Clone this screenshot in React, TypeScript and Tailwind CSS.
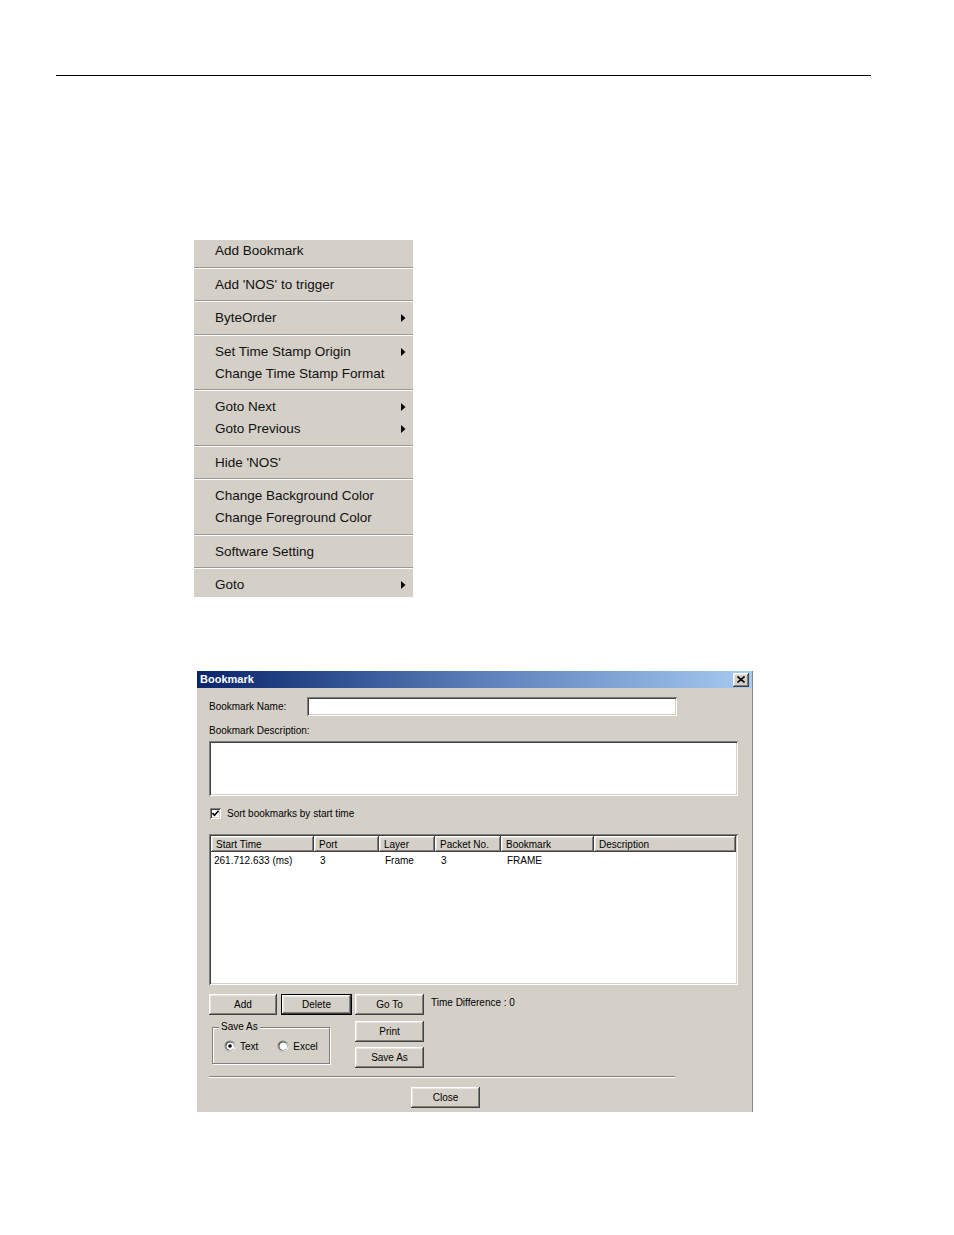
import React from "react";

const raised =
  "bg-[#d4d0c8] shadow-[inset_-1px_-1px_0_#404040,inset_1px_1px_0_#ffffff,inset_-2px_-2px_0_#808080,inset_2px_2px_0_#e8e6e1]";
const sunken =
  "bg-white shadow-[inset_1px_1px_0_#808080,inset_-1px_-1px_0_#ffffff,inset_2px_2px_0_#404040,inset_-2px_-2px_0_#d4d0c8]";

function Arrow() {
  return (
    <svg width="5" height="8" viewBox="0 0 5 8" className="absolute right-[7px] top-1/2 -translate-y-1/2">
      <path d="M0 0 L4.5 4 L0 8 Z" fill="#000" />
    </svg>
  );
}

function Item({ label, sub }: { label: string; sub?: boolean }) {
  return (
    <div className="relative h-[22px] flex items-center pl-[21px] pt-[1px] text-[13.5px] text-[#111]">
      {label}
      {sub && <Arrow />}
    </div>
  );
}

function Sep() {
  return (
    <div className="h-[11.5px] flex flex-col justify-center">
      <div className="h-px bg-[#9a9893]" />
      <div className="h-px bg-white" />
    </div>
  );
}

function Btn({ label, w, def }: { label: string; w: string; def?: boolean }) {
  if (def) {
    return (
      <div className={`${w} h-[21px] border border-black`}>
        <div className={`${raised} w-full h-full flex items-center justify-center`}>{label}</div>
      </div>
    );
  }
  return <div className={`${raised} ${w} h-[21px] flex items-center justify-center`}>{label}</div>;
}

function Radio({ on }: { on?: boolean }) {
  return (
    <svg width="12" height="12" viewBox="0 0 12 12">
      <circle cx="6" cy="6" r="5.5" fill="#808080" />
      <circle cx="6.5" cy="6.5" r="5" fill="#ffffff" />
      <circle cx="6" cy="6" r="4.5" fill="#404040" />
      <circle cx="6.3" cy="6.3" r="3.8" fill="#ffffff" />
      {on && <circle cx="6" cy="6" r="1.8" fill="#000" />}
    </svg>
  );
}

const cols = [
  { t: "Start Time", w: "w-[103px]" },
  { t: "Port", w: "w-[65px]" },
  { t: "Layer", w: "w-[56px]" },
  { t: "Packet No.", w: "w-[66px]" },
  { t: "Bookmark", w: "w-[93px]" },
  { t: "Description", w: "w-[142px]" },
];
const row = ["261.712.633 (ms)", "3", "Frame", "3", "FRAME", ""];

export default function App() {
  return (
    <div className="w-[954px] h-[1235px] bg-white flex flex-col" style={{ fontFamily: '"Liberation Sans", Arial, sans-serif' }}>
      <div className="mt-[75px] ml-[56px] w-[815px] h-px bg-black" />

      {/* Context menu */}
      <div className="mt-[164px] ml-[194px] w-[219px] bg-[#d4d0c8] pb-[1px]">
        <Item label="Add Bookmark" />
        <Sep />
        <Item label="Add 'NOS' to trigger" />
        <Sep />
        <Item label="ByteOrder" sub />
        <Sep />
        <Item label="Set Time Stamp Origin" sub />
        <Item label="Change Time Stamp Format" />
        <Sep />
        <Item label="Goto Next" sub />
        <Item label="Goto Previous" sub />
        <Sep />
        <Item label="Hide 'NOS'" />
        <Sep />
        <Item label="Change Background Color" />
        <Item label="Change Foreground Color" />
        <Sep />
        <Item label="Software Setting" />
        <Sep />
        <Item label="Goto" sub />
      </div>

      {/* Bookmark dialog */}
      <div className="mt-[74px] ml-[197px] w-[556px] h-[441px] bg-[#d4d0c8] border-r border-[#8a8884] flex flex-col text-[10px] text-black">
        <div className="h-[17px] flex items-center justify-between bg-gradient-to-r from-[#0a246a] via-[#5a7eb8] to-[#a6caf0] pl-[3px] pr-[3px]">
          <span className="text-white font-bold text-[11px]">Bookmark</span>
          <div className={`${raised} w-[16px] h-[14px] flex items-center justify-center`}>
            <svg width="8" height="7" viewBox="0 0 8 7">
              <path d="M0.5 0.5 L7.5 6.5 M7.5 0.5 L0.5 6.5" stroke="#000" strokeWidth="1.6" />
            </svg>
          </div>
        </div>

        <div className="flex items-center mt-[9px] ml-[12px] h-[19px]">
          <span className="w-[98px]">Bookmark Name:</span>
          <div className={`${sunken} w-[370px] h-[19px]`} />
        </div>

        <div className="mt-[8px] ml-[12px] h-[12px] flex items-center">Bookmark Description:</div>
        <div className={`${sunken} mt-[5px] ml-[12px] w-[529px] h-[55px]`} />

        <div className="mt-[12px] ml-[13px] flex items-center h-[11px] gap-[6px]">
          <div className={`${sunken} w-[11px] h-[11px] flex items-center justify-center`}>
            <svg width="7" height="7" viewBox="0 0 7 7">
              <path d="M0.5 3 L2.5 5.2 L6.5 0.8" stroke="#000" strokeWidth="1.6" fill="none" />
            </svg>
          </div>
          <span>Sort bookmarks by start time</span>
        </div>

        <div className={`${sunken} mt-[15px] ml-[12px] w-[529px] h-[151px] p-[2px] flex flex-col`}>
          <div className="flex h-[16px]">
            {cols.map((c) => (
              <div key={c.t} className={`${raised} ${c.w} h-[16px] flex items-center pl-[5px] overflow-hidden whitespace-nowrap`}>
                {c.t}
              </div>
            ))}
            <div className={`${raised} flex-1 h-[16px]`} />
          </div>
          <div className="flex h-[17px] items-center">
            {cols.map((c, i) => (
              <div key={c.t} className={`${c.w} ${i === 0 ? "pl-[3px]" : "pl-[6px]"} whitespace-nowrap`}>
                {row[i]}
              </div>
            ))}
          </div>
        </div>

        <div className="mt-[9px] ml-[12px] flex">
          <div className="flex flex-col w-[146px]">
            <div className="flex gap-[4px]">
              <Btn label="Add" w="w-[68px]" />
              <Btn label="Delete" w="w-[71px]" def />
            </div>
            <div className="relative mt-[12px] ml-[3px] w-[118px] h-[37px] border border-[#808080] shadow-[1px_1px_0_#ffffff,inset_1px_1px_0_#ffffff]">
              <span className="absolute -top-[8px] left-[6px] bg-[#d4d0c8] px-[2px] leading-[14px]">Save As</span>
              <div className="flex items-center h-full pl-[11px] pt-[1px]">
                <Radio on />
                <span className="ml-[4px]">Text</span>
                <span className="ml-[19px]">
                  <Radio />
                </span>
                <span className="ml-[4px]">Excel</span>
              </div>
            </div>
          </div>
          <div className="flex flex-col gap-[5.5px]">
            <Btn label="Go To" w="w-[69px]" />
            <Btn label="Print" w="w-[69px]" />
            <Btn label="Save As" w="w-[69px]" />
          </div>
          <div className="ml-[7px] mt-[1px] h-[14px] flex items-center">Time Difference : 0</div>
        </div>

        <div className="mt-[8px] ml-[12px] w-[466px] flex flex-col">
          <div className="h-px bg-[#808080]" />
          <div className="h-px bg-white" />
        </div>

        <div className="mt-[9px] ml-[214px]">
          <Btn label="Close" w="w-[69px]" />
        </div>
      </div>
    </div>
  );
}
